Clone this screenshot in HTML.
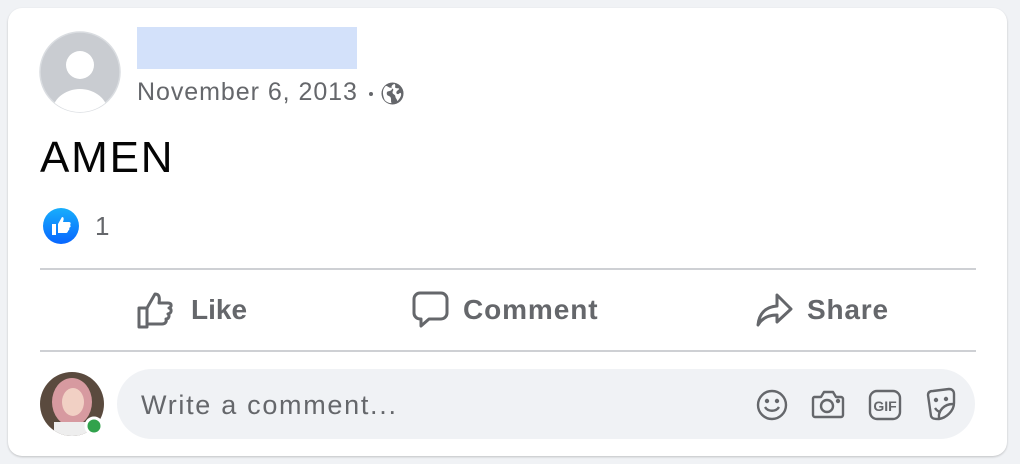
<!DOCTYPE html>
<html><head><meta charset="utf-8"><style>
body{margin:0;width:1020px;height:464px;background:#f0f2f5;font-family:"Liberation Sans",sans-serif;position:relative;overflow:hidden}
.card{position:absolute;left:8px;top:8px;width:999px;height:448px;background:#fff;border-radius:14px;box-shadow:0 1px 2px rgba(0,0,0,.2)}
.abs{position:absolute;white-space:nowrap}
.gray{color:#65676b}
.btn{position:absolute;top:290px;height:40px;display:flex;align-items:center;font-weight:bold;font-size:28px;color:#65676b}
.btn svg{margin-right:14px}
.hr{position:absolute;left:40px;width:936px;height:2px;background:#ced0d4}
</style></head><body>
<div class="card"></div>
<svg class="abs" style="left:39px;top:31px" width="82" height="82" viewBox="0 0 82 82">
<defs><clipPath id="c"><circle cx="41" cy="41" r="40"/></clipPath></defs>
<circle cx="41" cy="41" r="40" fill="#c9ccd1" stroke="#dadde1" stroke-width="1.5"/>
<g clip-path="url(#c)" fill="#fff"><circle cx="41" cy="34" r="14"/><ellipse cx="41" cy="82" rx="28" ry="24"/></g>
</svg>
<div class="abs" style="left:137px;top:27px;width:220px;height:42px;background:#d3e1fa"></div>
<div class="abs gray" style="left:137px;top:78px;font-size:25px;letter-spacing:0.95px">November 6, 2013</div>
<div class="abs" style="left:369px;top:92px;width:4px;height:4px;border-radius:50%;background:#65676b"></div>
<svg class="abs" style="left:381px;top:82px" width="23" height="23" viewBox="0 0 24 24"><circle cx="12" cy="12" r="11.5" fill="#65676b"/><path d="M5 4c2 0 3 2 5 2s2 2 0 3-4 0-4 3 3 2 4 4 0 4 1 6c-3 0-5-1-7-3-1-2-2-5-2-8s1-5 3-7zM14 2c2 2 0 3 1 4s3 0 4 1c-1 2-3 2-3 4s2 2 3 1 2-1 2 1-2 5-4 7c0-2-2-3-2-5s-3-2-3-4 2-3 0-4-1-4 2-5z" fill="#fff"/></svg>
<div class="abs" style="left:40px;top:133px;font-size:44px;letter-spacing:1.8px;color:#050505">AMEN</div>
<svg class="abs" style="left:43px;top:208px" width="36" height="36" viewBox="0 0 36 36"><defs><linearGradient id="g" x1="0" y1="0" x2="0" y2="1"><stop offset="0" stop-color="#18aefb"/><stop offset="1" stop-color="#0866ff"/></linearGradient></defs><circle cx="18" cy="18" r="18" fill="url(#g)"/><path d="M9 16h4v11H9zM15 16l4-7c2 0 2 2 1 5h6c2 0 2 2 1 3 1 1 1 2-1 3 1 1 0 2-1 3 0 1-1 2-2 2h-8z" fill="#fff"/></svg>
<div class="abs gray" style="left:95px;top:211px;font-size:26px">1</div>
<div class="hr" style="top:268px"></div>
<div class="btn" style="left:137px"><svg width="40" height="38" viewBox="0 0 40 38" fill="none" stroke="#65676b" stroke-width="3" stroke-linejoin="round"><path d="M2 17h8v19H2zM10 17l8-14c4 0 5 3 4 9h9c4 0 4 4 1 5 3 1 3 5-1 6 2 1 1 5-2 5 1 3-1 5-4 5H10"/></svg>Like</div>
<div class="btn" style="left:412px;letter-spacing:0.9px"><svg width="37" height="38" viewBox="0 0 37 38" fill="none" stroke="#65676b" stroke-width="3" stroke-linejoin="round"><path d="M8 2h21a6 6 0 0 1 6 6v14a6 6 0 0 1-6 6H17l-8 7v-7H8a6 6 0 0 1-6-6V8a6 6 0 0 1 6-6z"/></svg>Comment</div>
<div class="btn" style="left:756px;letter-spacing:0.8px"><svg width="37" height="36" viewBox="0 0 37 36" fill="none" stroke="#65676b" stroke-width="3" stroke-linejoin="round"><path d="M21 3l14 14-14 13v-7C12 23 6 26 2 33c1-11 7-18 19-19z"/></svg>Share</div>
<div class="hr" style="top:350px"></div>
<svg class="abs" style="left:40px;top:372px" width="66" height="66" viewBox="0 0 66 66"><defs><clipPath id="a"><circle cx="32" cy="32" r="32"/></clipPath></defs><g clip-path="url(#a)"><rect width="64" height="64" fill="#5a4a3e"/><ellipse cx="32" cy="30" rx="20" ry="24" fill="#d79aa0"/><ellipse cx="33" cy="30" rx="11" ry="14" fill="#f1d0c4"/><rect x="14" y="50" width="38" height="20" fill="#eee"/></g><circle cx="54" cy="54" r="8" fill="#31a24c" stroke="#fff" stroke-width="3"/></svg>
<div class="abs" style="left:117px;top:369px;width:858px;height:70px;border-radius:35px;background:#f0f2f5"></div>
<div class="abs gray" style="left:141px;top:390px;font-size:27px;letter-spacing:1.7px">Write a comment...</div>
<svg class="abs" style="left:756px;top:389px" width="32" height="32" viewBox="0 0 32 32" fill="none" stroke="#65676b" stroke-width="2.4"><circle cx="16" cy="16" r="14"/><path d="M9 18c3 5 11 5 14 0"/><circle cx="11" cy="12" r="1" fill="#65676b"/><circle cx="21" cy="12" r="1" fill="#65676b"/></svg>
<svg class="abs" style="left:811px;top:389px" width="34" height="30" viewBox="0 0 34 30" fill="none" stroke="#65676b" stroke-width="2.4" stroke-linejoin="round"><path d="M3 8h7l3-5h9l3 5h5a2 2 0 0 1 2 2v16a2 2 0 0 1-2 2H4a2 2 0 0 1-2-2V10a2 2 0 0 1 1-2z"/><circle cx="16" cy="17" r="6"/><circle cx="27" cy="12" r="1" fill="#65676b"/></svg>
<svg class="abs" style="left:868px;top:389px" width="34" height="32" viewBox="0 0 34 32" fill="none" stroke="#65676b" stroke-width="2.4"><rect x="2" y="2" width="30" height="28" rx="7"/><text x="17" y="22" font-family="Liberation Sans" font-size="14" font-weight="bold" fill="#65676b" stroke="none" text-anchor="middle">GIF</text></svg>
<svg class="abs" style="left:924px;top:387px" width="34" height="34" viewBox="0 0 34 34" fill="none" stroke="#65676b" stroke-width="2.4" stroke-linejoin="round"><path d="M4 8c0-3 2-4 5-4l16-2c3 0 5 2 5 5v9c0 8-8 15-15 16-4 0-7 0-8-3L4 8z"/><path d="M15 31c-1-7 5-14 14-14"/><path d="M11 21c2 3 4 4 6 4"/><circle cx="12" cy="13" r="1" fill="#65676b"/><circle cx="22" cy="12" r="1" fill="#65676b"/></svg>
</body></html>
